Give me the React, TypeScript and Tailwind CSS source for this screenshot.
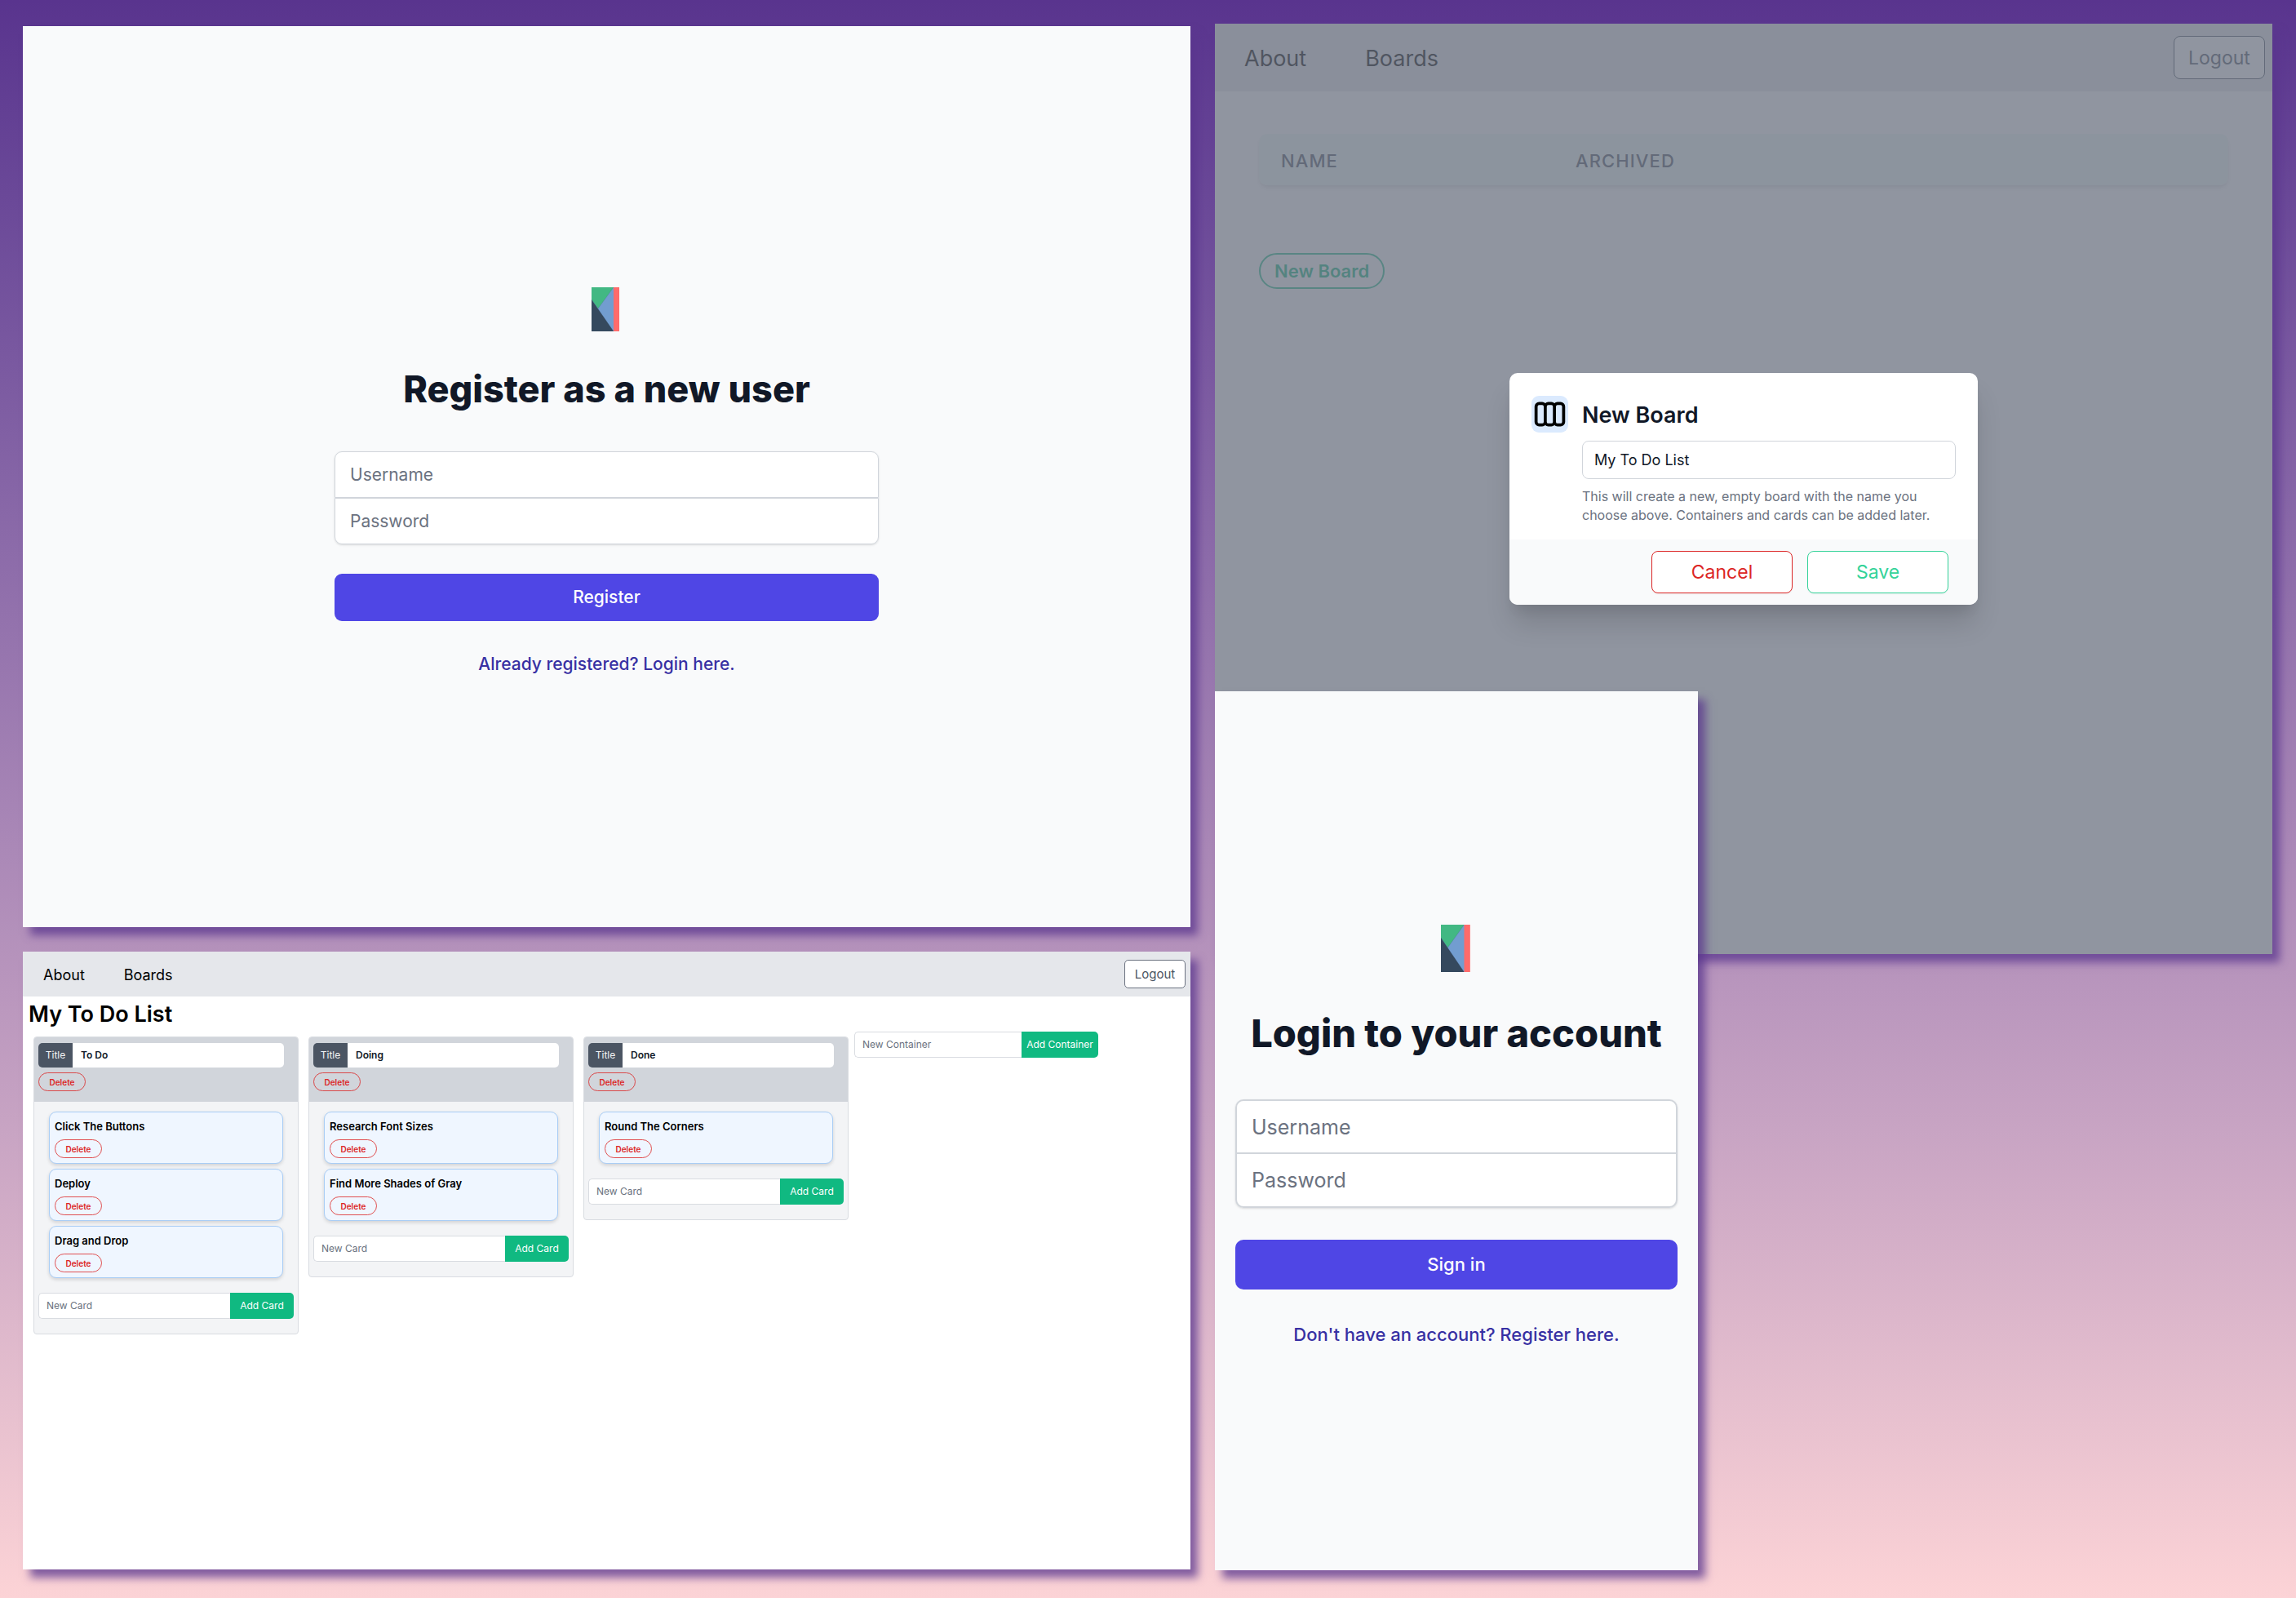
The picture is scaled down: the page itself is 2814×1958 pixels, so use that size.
import React from "react";

const panelShadow = "shadow-[9px_10px_10px_rgba(89,53,142,0.75)]";

function Logo({ className }: { className: string }) {
  return (
    <svg viewBox="0 0 37 54" preserveAspectRatio="none" className={className} aria-label="Logo" role="img">
      <rect width="28" height="54" fill="#729dd0" />
      <polygon points="0,0 27,0 8,26 0,15" fill="#42b883" />
      <polygon points="0,15 27,54 0,54" fill="#35495e" />
      <path d="M0 15L27 54M27 0L8 26" stroke="#35495e" strokeOpacity="0.3" strokeWidth="0.5" />
      <rect x="27" width="7" height="54" fill="#ff6b6b" />
    </svg>
  );
}

function RegisterScreen() {
  const field =
    "block h-[57px] w-full border border-[#d1d5db] bg-white px-[18px] text-[21px] text-[#111827] placeholder-[#6b7280] outline-none";
  return (
    <section className={`flex min-h-[1104px] flex-col items-center bg-[#f9fafb] px-8 pt-[320px] ${panelShadow}`}>
      <Logo className="h-[54px] w-[37px]" />
      <h2 className="mt-[44px] text-[45px] leading-[54px] font-extrabold text-[#111827]">Register as a new user</h2>
      <form className="mt-[49px] w-full max-w-[667px]" onSubmit={(e) => e.preventDefault()}>
        <div className="rounded-[9px] shadow-sm">
          <input type="text" aria-label="Username" placeholder="Username" className={`${field} rounded-t-[9px]`} />
          <input type="password" aria-label="Password" placeholder="Password" className={`${field} rounded-b-[9px]`} />
        </div>
        <button type="submit" className="mt-[36px] h-[58px] w-full rounded-[9px] bg-[#4f46e5] text-[21px] font-medium text-white">
          Register
        </button>
      </form>
      <a href="#login" className="mt-[38px] text-[21px] leading-[30px] font-medium text-[#3730a3]">
        Already registered? Login here.
      </a>
    </section>
  );
}

function LoginScreen() {
  const field =
    "block w-full border-2 border-[#d1d5db] bg-white px-[18px] text-[25px] text-[#111827] placeholder-[#6b7280] outline-none";
  return (
    <section
      className={`relative -mt-[322px] flex min-h-[1077px] w-[592px] flex-col items-center bg-[#f9fafb] px-[25px] pt-[286px] ${panelShadow}`}
    >
      <Logo className="h-[58px] w-[39px]" />
      <h2 className="mt-[46px] text-[47px] leading-[58px] font-extrabold whitespace-nowrap text-[#111827]">
        Login to your account
      </h2>
      <form className="mt-[52px] w-full" onSubmit={(e) => e.preventDefault()}>
        <div className="rounded-[10px] shadow-sm">
          <input type="text" aria-label="Username" placeholder="Username" className={`${field} h-[67px] rounded-t-[10px]`} />
          <input type="password" aria-label="Password" placeholder="Password" className={`${field} h-[66px] rounded-b-[10px] border-t-0`} />
        </div>
        <button type="submit" className="mt-[39px] h-[61px] w-full rounded-[10px] bg-[#4f46e5] text-[22px] font-medium text-white">
          Sign in
        </button>
      </form>
      <a href="#register" className="mt-[39px] text-[22px] leading-[32px] font-medium text-[#3730a3]">
        Don't have an account? Register here.
      </a>
    </section>
  );
}

function ColumnsIcon() {
  return (
    <svg viewBox="0 0 24 24" fill="none" stroke="#000" strokeWidth="2" strokeLinecap="round" strokeLinejoin="round" className="size-[45px]">
      <path d="M9 17V7m0 10a2 2 0 01-2 2H5a2 2 0 01-2-2V7a2 2 0 012-2h2a2 2 0 012 2m0 10a2 2 0 002 2h2a2 2 0 002-2M9 7a2 2 0 012-2h2a2 2 0 012 2m0 10V7m0 10a2 2 0 002 2h2a2 2 0 002-2V7a2 2 0 00-2-2h-2a2 2 0 00-2 2" />
    </svg>
  );
}

function NewBoardDialog() {
  return (
    <div
      role="dialog"
      aria-labelledby="dialog-title"
      className="w-[574px] overflow-hidden rounded-[10px] bg-white shadow-[0_26px_34px_-4px_rgba(0,0,0,0.14),0_12px_14px_-6px_rgba(0,0,0,0.08)]"
    >
      <div className="flex gap-[17px] px-[27px] pt-7 pb-[18px]">
        <div className="size-[45px] shrink-0 rounded-[9px] bg-[#dbeafe]">
          <ColumnsIcon />
        </div>
        <div className="flex-1 pt-[6px]">
          <h3 id="dialog-title" className="text-[27px] leading-[36px] font-semibold text-[#111827]">
            <label htmlFor="board-name">New Board</label>
          </h3>
          <input
            id="board-name"
            type="text"
            defaultValue="My To Do List"
            className="mt-[13px] block h-[47px] w-full rounded-[8px] border border-[#d1d5db] px-[14px] text-[18px] text-[#111827] outline-none"
          />
          <p className="mt-[10px] text-[16px] leading-[23px] text-[#6b7280]">
            This will create a new, empty board with the name you
            <br />
            choose above. Containers and cards can be added later.
          </p>
        </div>
      </div>
      <div className="flex justify-end gap-[18px] bg-[#f9fafb] py-[14px] pr-9">
        <button type="button" className="h-[52px] w-[173px] rounded-[8px] border border-[#dc2626] bg-white text-[23px] text-[#dc2626] shadow-xs">
          Cancel
        </button>
        <button type="button" className="h-[52px] w-[173px] rounded-[8px] border border-[#34d399] bg-white text-[23px] text-[#34d399] shadow-xs">
          Save
        </button>
      </div>
    </div>
  );
}

function BoardsScreen() {
  return (
    <section className={`relative min-h-[1140px] bg-white ${panelShadow}`}>
      <header className="flex h-[83px] items-center justify-between bg-[#e5e7eb] pr-[9px] pl-9">
        <nav className="flex gap-[72px] pt-[3px] text-[27px] text-black">
          <a href="#about">About</a>
          <a href="#boards">Boards</a>
        </nav>
        <button type="button" className="h-[53px] w-[112px] rounded-[8px] border border-[#4b5563] bg-white pt-[2px] text-[23px] text-[#4b5563]">
          Logout
        </button>
      </header>
      <div className="px-[54px] pt-[52px]">
        <div className="overflow-hidden rounded-[10px] shadow-md">
          <table className="w-full table-fixed text-left">
            <thead className="bg-[#f0faf5]">
              <tr className="h-[63px] text-[22px] tracking-wider text-[#4b5563] uppercase">
                <th scope="col" className="w-[361px] px-[27px] pt-[3px] font-medium">Name</th>
                <th scope="col" className="px-[27px] pt-[3px] font-medium">Archived</th>
              </tr>
            </thead>
          </table>
        </div>
        <button type="button" className="mt-[83px] h-[44px] rounded-full border-2 border-[#10b981]/90 px-[17px] text-[22px] font-semibold text-[#10b981]">
          New Board
        </button>
      </div>
      <div className="absolute inset-0 flex items-start justify-center bg-[#6b7280]/75 pt-[428px]">
        <NewBoardDialog />
      </div>
    </section>
  );
}

function DeleteButton() {
  return (
    <button type="button" className="block h-[23px] w-[58px] rounded-full border border-[#dc2626]/80 text-[10px] leading-none font-semibold text-[#dc2626]">
      Delete
    </button>
  );
}

function AddRow({ label, action, wide }: { label: string; action: string; wide?: boolean }) {
  return (
    <form className="flex h-8" onSubmit={(e) => e.preventDefault()}>
      <input
        type="text"
        aria-label={label}
        placeholder={label}
        className="min-w-0 flex-1 rounded-l-[5px] border border-r-0 border-[#d9dce1] bg-white px-[9px] text-[12px] placeholder-[#6b7280] outline-none"
      />
      <button
        type="submit"
        className={`${wide ? "w-[94px]" : "w-[78px]"} shrink-0 rounded-r-[5px] bg-[#10b981] text-[12px] whitespace-nowrap text-white`}
      >
        {action}
      </button>
    </form>
  );
}

function BoardColumn({ title, cards }: { title: string; cards: string[] }) {
  const id = title.toLowerCase().replace(" ", "-");
  return (
    <article className="mt-[6px] w-[325px] shrink-0 overflow-hidden rounded-[4px] border border-[#d9dce1] bg-[#f3f4f6] pb-[18px]">
      <div className="bg-[#d1d5db] px-[5px] pt-[7px] pb-[13px]">
        <div className="flex h-[30px] w-[301px]">
          <label htmlFor={`title-${id}`} className="flex w-[42px] items-center justify-center rounded-l-[5px] bg-[#4b5563] text-[12px] text-[#f3f4f6]">
            Title
          </label>
          <input
            id={`title-${id}`}
            type="text"
            defaultValue={title}
            className="min-w-0 flex-1 rounded-r-[5px] bg-white px-[10px] text-[12px] font-semibold text-[#111827] outline-none"
          />
        </div>
        <div className="mt-[6px]">
          <DeleteButton />
        </div>
      </div>
      <ul className="flex flex-col gap-[6px] px-[18px] pt-3">
        {cards.map((card) => (
          <li key={card} className="h-16 rounded-[9px] border border-[#a9cdf5] bg-[#eff6ff] px-[6px] pt-[7px] shadow-[0_2px_4px_rgba(0,0,0,0.14)]">
            <h4 className="mb-[6px] text-[13px] leading-5 font-semibold text-black">{card}</h4>
            <DeleteButton />
          </li>
        ))}
      </ul>
      <div className="mt-[18px] px-[5px]">
        <AddRow label="New Card" action="Add Card" />
      </div>
    </article>
  );
}

const columns = [
  { title: "To Do", cards: ["Click The Buttons", "Deploy", "Drag and Drop"] },
  { title: "Doing", cards: ["Research Font Sizes", "Find More Shades of Gray"] },
  { title: "Done", cards: ["Round The Corners"] },
];

function BoardScreen() {
  return (
    <section className={`min-h-[757px] bg-white ${panelShadow}`}>
      <header className="flex h-[55px] items-center justify-between bg-[#e5e7eb] pr-[6px] pl-[25px]">
        <nav className="flex gap-12 pt-px text-[18px] text-black">
          <a href="#about">About</a>
          <a href="#boards">Boards</a>
        </nav>
        <button type="button" className="h-[35px] w-[75px] rounded-[5px] border border-[#6b7280] bg-white pt-px text-[15px] text-[#4b5563]">
          Logout
        </button>
      </header>
      <h1 className="px-[7px] pt-1 text-[27px] leading-[36px] font-semibold text-black">My To Do List</h1>
      <div className="mt-[3px] flex items-start pl-[13px]">
        <div className="flex items-start gap-3">
          {columns.map((c) => (
            <BoardColumn key={c.title} title={c.title} cards={c.cards} />
          ))}
        </div>
        <div className="ml-[7px] w-[299px]">
          <AddRow label="New Container" action="Add Container" wide />
        </div>
      </div>
    </section>
  );
}

export default function App() {
  return (
    <main className="grid min-h-screen grid-cols-[1431fr_1296fr] items-start gap-[30px] bg-linear-to-b from-[#59348e] to-[#fcd3d6] pr-[29px] pb-[34px] pl-7 font-[Inter,'Liberation_Sans',sans-serif]">
      <div className="flex flex-col gap-[30px] pt-8">
        <RegisterScreen />
        <BoardScreen />
      </div>
      <div className="pt-[29px]">
        <BoardsScreen />
        <LoginScreen />
      </div>
    </main>
  );
}
